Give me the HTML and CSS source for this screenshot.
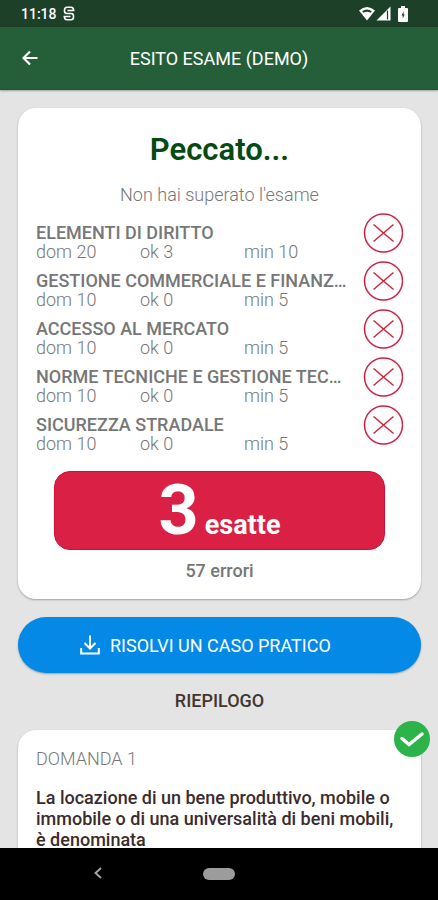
FILE: index.html
```html
<!DOCTYPE html>
<html lang="it">

<head>
    <meta charset="UTF-8">
    <meta name="viewport" content="width=device-width, initial-scale=1.0">
    <title>Esito esame (demo)</title>
    <link rel="stylesheet" href="styles.css">
</head>
<body>

  <div class="status-bar">
    <span class="clock">11:18</span>
    <svg class="status-app" width="12" height="15" viewBox="0 0 12 15">
      <path d="M10.500 5V4Q10.500 1.200 8 1.200H4Q1.500 1.200 1.500 4V5Q1.500 7.500 4 7.500H8Q10.500 7.500 10.500 10V11Q10.500 13.800 8 13.800H4Q1.500 13.800 1.500 11V10M4.500 4.500H11.500M0.500 10.500H7.500" fill="none" stroke="#fff" stroke-width="1.600"/>
    </svg>
    <div class="status-icons">
      <svg width="18" height="15" viewBox="0 0 18 15">
        <path d="M1 4.500Q9-2.500 17 4.500L9 14.500Z" fill="#fff"/>
        <path d="M4.200 5.200Q9 1.800 13.800 5.200L12.600 6.700Q9 4.600 5.400 6.700Z" fill="#1d4028"/>
      </svg>
      <svg width="15" height="15" viewBox="0 0 15 15">
        <path d="M14.500 0.500V14.500H0.500Z" fill="#fff"/>
        <path d="M11.500 4.500V13.500" stroke="#1d4028" stroke-width="1.200"/>
      </svg>
      <svg class="battery" width="10" height="16" viewBox="0 0 10 16">
        <path d="M3 0h4v2h2q1 0 1 1v12q0 1-1 1H1q-1 0-1-1V3q0-1 1-1h2z" fill="#fff"/>
        <path d="M5.600 5.500L3.500 9.500h1.200V12.500L6.700 8.500H5.600z" fill="#1d4028"/>
      </svg>
    </div>
  </div>

  <header class="header">
    <button class="back-btn" aria-label="Indietro">
      <svg width="16" height="16" viewBox="0 0 16 16">
        <path d="M15.500 8H2M8 1.500L1.500 8L8 14.500" fill="none" stroke="#fff" stroke-width="2.200"/>
      </svg>
    </button>
    <h1>ESITO ESAME (DEMO)</h1>
  </header>

  <main class="content">
    <section class="card">
      <h2>Peccato...</h2>
      <p class="subtitle">Non hai superato l'esame</p>

      <ul class="subjects">
        <li class="subject">
          <div class="details">
            <h3>ELEMENTI DI DIRITTO</h3>
            <div class="scores"><span>dom 20</span><span>ok 3</span><span>min 10</span></div>
          </div>
          <svg class="failed" viewBox="0 0 40 40"><circle cx="20.500" cy="20" r="19"/><path d="M10.500 11.500L30.500 28.500M30.500 11.500L10.500 28.500"/></svg>
        </li>
        <li class="subject">
          <div class="details">
            <h3>GESTIONE COMMERCIALE E FINANZIARIA</h3>
            <div class="scores"><span>dom 10</span><span>ok 0</span><span>min 5</span></div>
          </div>
          <svg class="failed" viewBox="0 0 40 40"><circle cx="20.500" cy="20" r="19"/><path d="M10.500 11.500L30.500 28.500M30.500 11.500L10.500 28.500"/></svg>
        </li>
        <li class="subject">
          <div class="details">
            <h3>ACCESSO AL MERCATO</h3>
            <div class="scores"><span>dom 10</span><span>ok 0</span><span>min 5</span></div>
          </div>
          <svg class="failed" viewBox="0 0 40 40"><circle cx="20.500" cy="20" r="19"/><path d="M10.500 11.500L30.500 28.500M30.500 11.500L10.500 28.500"/></svg>
        </li>
        <li class="subject">
          <div class="details">
            <h3>NORME TECNICHE E GESTIONE TECNICA</h3>
            <div class="scores"><span>dom 10</span><span>ok 0</span><span>min 5</span></div>
          </div>
          <svg class="failed" viewBox="0 0 40 40"><circle cx="20.500" cy="20" r="19"/><path d="M10.500 11.500L30.500 28.500M30.500 11.500L10.500 28.500"/></svg>
        </li>
        <li class="subject">
          <div class="details">
            <h3>SICUREZZA STRADALE</h3>
            <div class="scores"><span>dom 10</span><span>ok 0</span><span>min 5</span></div>
          </div>
          <svg class="failed" viewBox="0 0 40 40"><circle cx="20.500" cy="20" r="19"/><path d="M10.500 11.500L30.500 28.500M30.500 11.500L10.500 28.500"/></svg>
        </li>
      </ul>

      <div class="result">
        <span class="result-number">3</span>
        <span class="result-label">esatte</span>
      </div>
      <p class="errors">57 errori</p>
    </section>

    <button class="case-btn">
      <svg width="20" height="20" viewBox="0 0 20 20">
        <path d="M10 0.500V13M4.500 8L10 13.500L15.500 8M1.200 13V18.500H18.800V13" fill="none" stroke="#fff" stroke-width="2"/>
      </svg>
      <span>RISOLVI UN CASO PRATICO</span>
    </button>

    <h2 class="summary-title">RIEPILOGO</h2>

    <section class="card question">
      <svg class="correct" viewBox="0 0 36 36">
        <circle cx="18" cy="18" r="18" fill="#2cb34a"/>
        <path d="M8 17.500L15 23.500L28 13" fill="none" stroke="#fff" stroke-width="3.500" stroke-linecap="round"/>
      </svg>
      <p class="question-number">DOMANDA 1</p>
      <p class="question-text">La locazione di un bene produttivo, mobile o immobile o di una universalità di beni mobili, è denominata</p>
    </section>
  </main>

  <nav class="nav-bar">
    <button aria-label="Indietro">
      <svg width="8" height="12" viewBox="0 0 8 12">
        <path d="M7 1L1.500 6L7 11" fill="none" stroke="#aaa" stroke-width="1.800"/>
      </svg>
    </button>
    <button class="home-btn" aria-label="Home"></button>
  </nav>

</body>
</html>
```

FILE: styles.css
```css
* {
    box-sizing: border-box;
    margin: 0;
    padding: 0;
}

body {
    display: flex;
    flex-direction: column;
    height: 100vh;
    font-family: Roboto, "Liberation Sans", sans-serif;
    font-size: 18px;
    background-color: #e4e4e4;
    color: #777;
}

button {
    font-family: inherit;
    border: none;
    background: none;
    cursor: pointer;
}

svg {
    flex: none;
}

.status-bar {
    display: flex;
    align-items: center;
    height: 27px;
    padding: 0 30px 0 21px;
    background-color: #1d4028;
    color: #fff;
}

.clock {
    font-size: 14px;
    font-weight: 500;
}

.status-app {
    margin-left: 6px;
}

.status-icons {
    display: flex;
    align-items: center;
    margin-left: auto;
}

.battery {
    margin-left: 7px;
}

.header {
    display: grid;
    grid-template-columns: 60px 1fr 60px;
    align-items: center;
    height: 63px;
    background-color: #245f39;
    border-bottom: 1px solid #17572e;
    box-shadow: 0 1px 2px rgba(0, 0, 0, 0.3);
    color: #fff;
    z-index: 1;
}

.back-btn {
    display: flex;
    align-items: center;
    height: 100%;
    padding: 0 22px;
}

.header h1 {
    font-size: 18px;
    font-weight: 400;
    text-align: center;
}

.content {
    flex: 1;
    min-height: 0;
    overflow: hidden;
    padding: 18px 17px 0 18px;
}

.card {
    background-color: #fff;
    border-radius: 18px;
    padding: 18px;
    box-shadow: 0 1px 2px rgba(0, 0, 0, 0.3);
}

.card h2 {
    padding-top: 4px;
    font-size: 31px;
    font-weight: 600;
    line-height: 40px;
    text-align: center;
    color: #044a11;
}

.subtitle {
    margin: 14px 0 8px;
    font-weight: 300;
    line-height: 21px;
    text-align: center;
}

.subjects {
    list-style: none;
}

.subject {
    display: flex;
    gap: 15px;
    height: 48px;
}

.details {
    flex: 1;
    min-width: 0;
    padding-top: 9px;
}

.details h3 {
    font-size: 18px;
    font-weight: 500;
    line-height: 22px;
    overflow: hidden;
    white-space: nowrap;
    text-overflow: ellipsis;
}

.scores {
    display: grid;
    grid-template-columns: repeat(3, 1fr);
    font-weight: 300;
    line-height: 15px;
}

.failed {
    width: 40px;
    height: 40px;
    fill: none;
    stroke: #d4213f;
    stroke-width: 1.5;
}

.result {
    display: flex;
    align-items: baseline;
    justify-content: center;
    gap: 6px;
    height: 79px;
    margin: 18px 18px 10px;
    background-color: #da2145;
    border: 1px solid #d00f35;
    border-radius: 16px;
    color: #fff;
    font-weight: 700;
}

.result-number {
    font-size: 70px;
    line-height: 77px;
}

.result-label {
    font-size: 27px;
}

.errors {
    font-weight: 500;
    line-height: 21px;
    text-align: center;
}

.case-btn {
    display: flex;
    align-items: center;
    gap: 10px;
    width: 100%;
    height: 56px;
    margin: 18px 0 17px;
    padding: 0 62px;
    background-color: #0489e7;
    border-radius: 28px;
    box-shadow: 0 1px 2px rgba(0, 0, 0, 0.3);
    color: #fff;
    font-size: 18px;
    font-weight: 400;
}

.summary-title {
    font-size: 18px;
    font-weight: 500;
    line-height: 22px;
    text-align: center;
    color: #42352f;
}

.question {
    position: relative;
    margin-top: 18px;
}

.correct {
    position: absolute;
    top: -9px;
    right: -9px;
    width: 36px;
    height: 36px;
}

.question-number {
    margin-bottom: 18px;
    font-weight: 300;
    line-height: 21px;
}

.question-text {
    font-weight: 500;
    line-height: 21px;
    color: #3a2c2c;
}

.nav-bar {
    display: grid;
    grid-template-columns: 1fr 48px 1fr;
    align-items: center;
    justify-items: center;
    height: 52px;
    background-color: #000;
}

.home-btn {
    width: 32px;
    height: 12px;
    background-color: #9c9c9c;
    border-radius: 6px;
}
```
